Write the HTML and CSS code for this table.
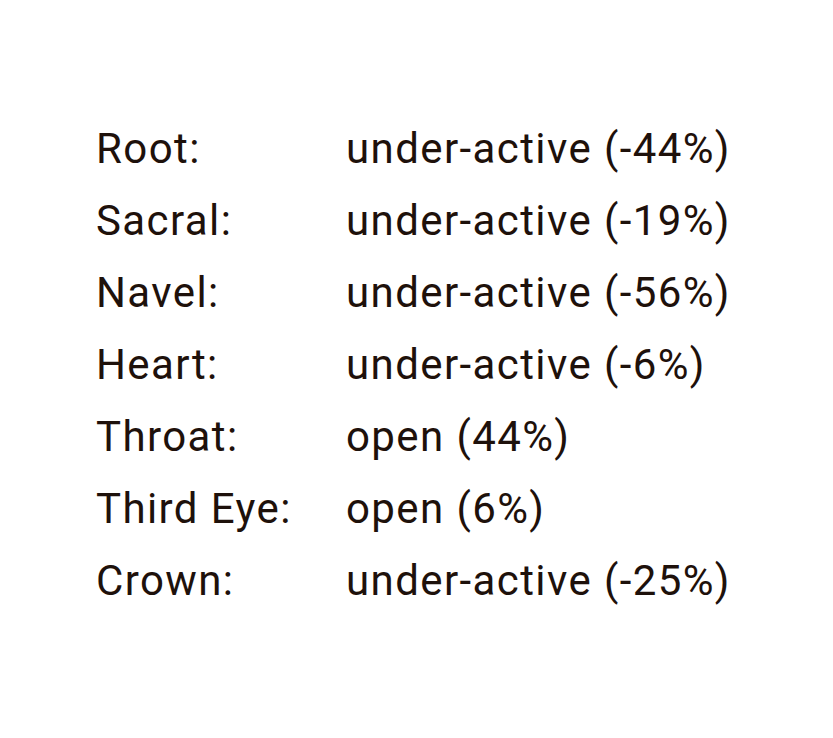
FILE: index.html
```html
<!DOCTYPE html>
<html>
<head>
<meta charset="utf-8">
<link rel="stylesheet" href="styles.css">
</head>
<body>
<div class="table">
  <div class="label">Root:</div><div class="value">under-active (-44%)</div>
  <div class="label">Sacral:</div><div class="value">under-active (-19%)</div>
  <div class="label">Navel:</div><div class="value">under-active (-56%)</div>
  <div class="label">Heart:</div><div class="value">under-active (-6%)</div>
  <div class="label">Throat:</div><div class="value">open (44%)</div>
  <div class="label">Third Eye:</div><div class="value">open (6%)</div>
  <div class="label">Crown:</div><div class="value">under-active (-25%)</div>
</div>
</body>
</html>
```
FILE: styles.css
```css
html, body {
  margin: 0;
  background: #ffffff;
}
body {
  font-family: Roboto, "Noto Sans", sans-serif;
  color: #1e110b;
  padding: 113px 0 0 96px;
}
.table {
  display: grid;
  grid-template-columns: 250px auto;
  font-size: 42px;
  letter-spacing: 1.4px;
  line-height: 72px;
}
```
